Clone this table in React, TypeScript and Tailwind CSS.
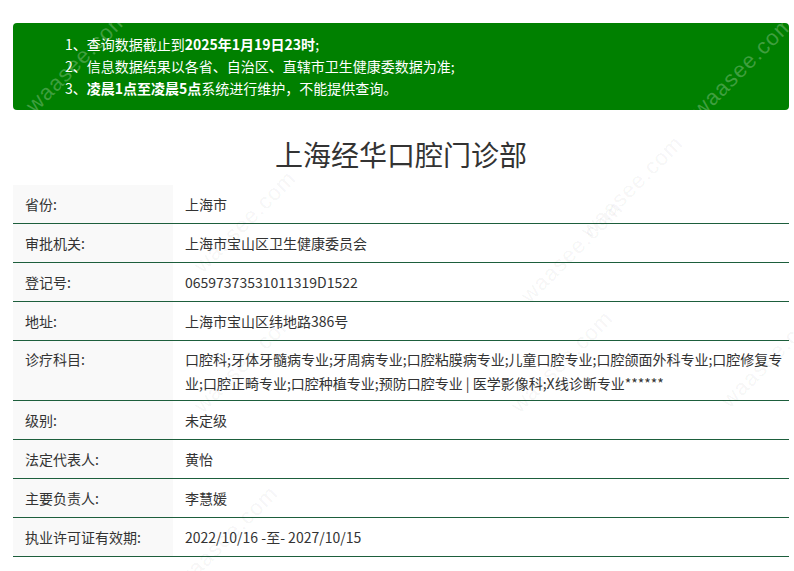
const font = { fontFamily: '"Microsoft YaHei", "Noto Sans CJK SC", "Noto Sans", sans-serif' };

const rows: { label: string; value: string; multi?: boolean }[] = [
  { label: "省份:", value: "上海市" },
  { label: "审批机关:", value: "上海市宝山区卫生健康委员会" },
  { label: "登记号:", value: "06597373531011319D1522" },
  { label: "地址:", value: "上海市宝山区纬地路386号" },
  {
    label: "诊疗科目:",
    value:
      "口腔科;牙体牙髓病专业;牙周病专业;口腔粘膜病专业;儿童口腔专业;口腔颌面外科专业;口腔修复专业;口腔正畸专业;口腔种植专业;预防口腔专业 | 医学影像科;X线诊断专业******",
    multi: true,
  },
  { label: "级别:", value: "未定级" },
  { label: "法定代表人:", value: "黄怡" },
  { label: "主要负责人:", value: "李慧媛" },
  { label: "执业许可证有效期:", value: "2022/10/16 -至- 2027/10/15" },
];

// faint diagonal site marks laid over the page
const marks: { x: number; y: number; light?: boolean }[] = [
  { x: 10, y: 45, light: true },
  { x: 676, y: 50, light: true },
  { x: 178, y: 205 },
  { x: 505, y: 235 },
  { x: 565, y: 170 },
  { x: 178, y: 345 },
  { x: 495, y: 345 },
  { x: 705, y: 340 },
  { x: 160, y: 520 },
];

export default function App() {
  return (
    <div className="relative w-[794px] h-[571px] overflow-hidden bg-white text-[#333]" style={font}>
      <div className="pl-[13px] pr-[5px] pt-[23px]">
        <div className="rounded-[4px] bg-[#008000] pl-[52px] pt-[10px] pb-[11px] text-[14px] leading-[22px] text-white">
          <p>
            1、查询数据截止到<b>2025年1月19日23时</b>;
          </p>
          <p>2、信息数据结果以各省、自治区、直辖市卫生健康委数据为准;</p>
          <p>
            3、<b>凌晨1点至凌晨5点</b>系统进行维护，不能提供查询。
          </p>
        </div>

        <h1 className="mt-[26px] mb-[12px] text-center text-[28px] leading-[37px] font-normal text-[#333]">
          上海经华口腔门诊部
        </h1>

        <div className="flex flex-col text-[14px] leading-[24px]">
          {rows.map(row => (
            <div key={row.label} className="flex border-b border-[#1d5e3c]">
              <div
                className={
                  "w-[160px] shrink-0 bg-[#f9f9f9] px-[12px] " +
                  (row.multi ? "pt-[6px] pb-[5px]" : "py-[7px]")
                }
              >
                {row.label}
              </div>
              <div
                className={
                  "flex-1 break-all pl-[12px] pr-[6px] " + (row.multi ? "pt-[6px] pb-[5px]" : "py-[7px]")
                }
              >
                {row.value}
              </div>
            </div>
          ))}
        </div>
      </div>

      {marks.map((m, i) => (
        <span
          key={i}
          className={
            "pointer-events-none absolute -rotate-45 text-[22px] tracking-[1px] " +
            (m.light ? "text-white/25" : "text-black/[0.05]")
          }
          style={{ left: m.x, top: m.y, fontFamily: "Arial, 'Liberation Sans', sans-serif" }}
        >
          waasee.com
        </span>
      ))}
    </div>
  );
}
